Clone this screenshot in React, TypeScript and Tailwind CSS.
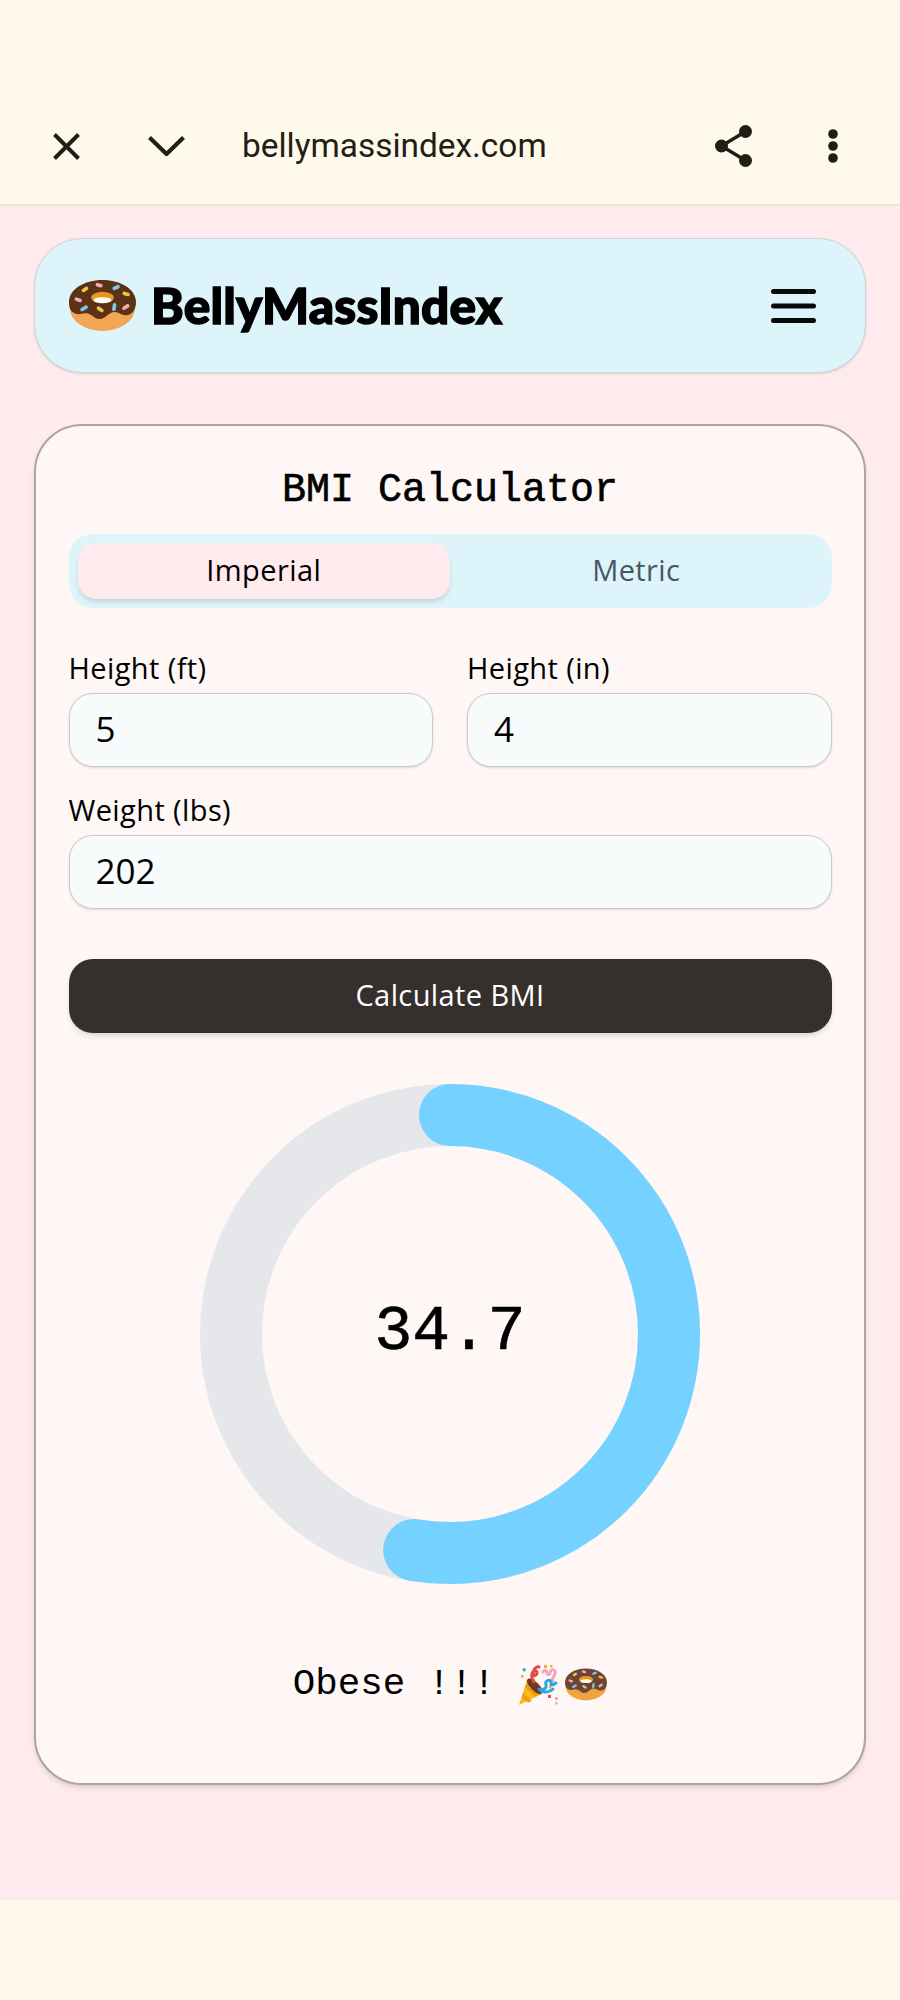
function Doughnut({ className, choc = "#5a3216", dough = "#f2a552" }: { className: string; choc?: string; dough?: string }) {
  return (
    <svg viewBox="0 0 200 152" className={className}>
      <ellipse cx="100" cy="84" rx="97" ry="68" fill={dough} />
      <path
        d="M0 66C0 28 45 0 100 0s100 28 100 66c0 22-12 38-30 39-16 1-24-14-42-8-14 5-20 20-38 19-17-1-24-19-42-17-14 2-24 6-35-2C4 92 0 80 0 66Z"
        fill={choc}
      />
      <ellipse cx="100" cy="52" rx="34" ry="17" fill="#e8981e" />
      <ellipse cx="100" cy="60" rx="27" ry="9" fill="#ffffff" />
      <g strokeWidth="11" strokeLinecap="round" fill="none">
        <path d="M85 14l10 3" stroke="#f4a9b8" />
        <path d="M135 25l11-5" stroke="#7ec8e8" />
        <path d="M43 31l9-6" stroke="#f6c344" />
        <path d="M165 40l11 3" stroke="#f6c344" />
        <path d="M22 57l11 4" stroke="#f4a9b8" />
        <path d="M39 88l12-7" stroke="#7ec8e8" />
        <path d="M88 84l10 7" stroke="#f6c344" />
        <path d="M136 74l-2 13" stroke="#7ec8e8" />
        <path d="M164 84l11-7" stroke="#f4a9b8" />
      </g>
    </svg>
  );
}

function Popper() {
  return (
    <svg viewBox="0 0 40 41" className="w-[40px] h-[41px]">
      <path d="M0 41L8 16 23 30Z" fill="#f9b81c" />
      <path d="M4 29l9 8-4 1.500-6-5ZM7 20l12 11-3 1.500L6 23Z" fill="#ee9a11" />
      <path d="M9 15c3-2 9 3 13 8 2 3 2 6 0 7-3 1-8-3-11-7-3-3-4-7-2-8Z" fill="#6b3a22" />
      <g fill="none" strokeWidth="3" strokeLinecap="round" strokeLinejoin="round">
        <path d="M15 18c-3-4-3-9 0-11 3-1 4 2 2 4s-4-1-2-5 5-3 5-3" stroke="#e8483f" />
        <path d="M24 8c2-3 4-1 4 1s3 2 3 0 2-4 4-3 1 4 0 6-3 3-1 5" stroke="#f2a6bd" />
        <path d="M20 25c3 2 6 0 7-2s-2-4 1-6 5 1 4 3 2 1 5-1M22 27c4 2 9 1 12-2" stroke="#2ba6e4" />
      </g>
      <g>
        <rect x="4" y="4" width="3" height="3" fill="#2ba6e4" transform="rotate(30 5 5)" />
        <rect x="2" y="11" width="2.500" height="2.500" fill="#f2a541" />
        <rect x="25" y="1" width="3" height="3" fill="#f2a541" />
        <rect x="31" y="1" width="2.500" height="2.500" fill="#f2a541" />
        <rect x="29" y="31" width="3" height="3" fill="#e8483f" />
        <rect x="36" y="33" width="3" height="3" fill="#f2a6bd" />
        <rect x="36" y="38" width="2.500" height="2.500" fill="#f2a6bd" />
        <rect x="30" y="22" width="2.500" height="2.500" fill="#f2a541" />
      </g>
    </svg>
  );
}

function Field({ label, value }: { label: string; value: string }) {
  return (
    <label className="block">
      <span className="block h-[38px] leading-[38px] mb-[6px] text-[29px] tracking-[0.4px] text-black">{label}</span>
      <input
        readOnly
        value={value}
        className="block w-full h-[74px] pb-[3px] rounded-[24px] bg-[#f8fbfb] border-[1.5px] border-[#cfc9c6] px-[26px] text-[35px] text-black shadow-sm outline-none"
      />
    </label>
  );
}

function Gauge() {
  const r = 219;
  const c = 2 * Math.PI * r;
  return (
    <svg viewBox="0 0 500 500" className="w-[500px] h-[500px] mx-auto -rotate-90">
      <circle cx="250" cy="250" r={r} fill="none" stroke="#e5e7eb" strokeWidth="62" />
      <circle
        cx="250"
        cy="250"
        r={r}
        fill="none"
        stroke="#75d1ff"
        strokeWidth="62"
        strokeLinecap="round"
        strokeDasharray={`${c * 0.526} ${c}`}
      />
    </svg>
  );
}

export default function App() {
  return (
    <div className="w-[900px] h-[2000px] flex flex-col bg-[#ffebed] font-['Open_Sans','Noto_Sans',sans-serif]">
      {/* browser chrome */}
      <header className="h-[206px] pt-[88px] flex items-center bg-[#fff9eb] border-b-2 border-[#ece7dc] text-[#1f1f17]">
        <svg viewBox="0 0 27 27" className="w-[27px] h-[27px] ml-[53px]" fill="none" stroke="currentColor" strokeWidth="4">
          <path d="M1.500 1.500l24 24M25.500 1.500l-24 24" />
        </svg>
        <svg viewBox="0 0 37 20" className="w-[37px] h-[20px] ml-[68px]" fill="none" stroke="currentColor" strokeWidth="4.200">
          <path d="M1.500 1.500L18.500 18 35.500 1.500" />
        </svg>
        <span className="ml-[57px] flex-1 font-['Roboto',sans-serif] text-[33.400px] leading-none">bellymassindex.com</span>
        <svg viewBox="0 0 37 42" className="w-[37px] h-[42px]" fill="currentColor">
          <circle cx="30.500" cy="6.500" r="6.500" />
          <circle cx="6.500" cy="21" r="6.500" />
          <circle cx="30.500" cy="35.500" r="6.500" />
          <path d="M30.500 6.500L6.500 21l24 14.500" fill="none" stroke="currentColor" strokeWidth="3.500" />
        </svg>
        <svg viewBox="0 0 10 34" className="w-[10px] h-[34px] ml-[76px] mr-[62px]" fill="currentColor">
          <circle cx="5" cy="5" r="4.800" />
          <circle cx="5" cy="17" r="4.800" />
          <circle cx="5" cy="29" r="4.800" />
        </svg>
      </header>

      <main className="flex-1 px-[34px] pt-[32px]">
        <nav className="h-[135px] flex items-center justify-between pl-[34px] pr-[49px] rounded-[48px] bg-[#dcf4fa] border border-[#c9d6de] shadow-sm">
          <div className="flex items-center gap-[15px]">
            <Doughnut className="w-[67px] h-[51px]" />
            <span className="font-['Lato',sans-serif] font-black text-[49.500px] tracking-[0.2px] text-black [-webkit-text-stroke:1.5px_black]">
              BellyMassIndex
            </span>
          </div>
          <svg viewBox="0 0 45 34" className="w-[45px] h-[34px]" fill="none" stroke="#0a0a0a" strokeWidth="5" strokeLinecap="round">
            <path d="M2.500 2.500h40M2.500 17h40M2.500 31.500h40" />
          </svg>
        </nav>

        <section className="mt-[51px] h-[1361px] rounded-[48px] bg-[#fff7f5] border-2 border-[#aaa4a2] shadow-md px-[32.500px] pt-[37px]">
          <h1 className="h-[57px] leading-[56px] text-center font-['Liberation_Mono',monospace] text-[40px] text-black [-webkit-text-stroke:0.6px_black]">
            BMI Calculator
          </h1>

          <div className="mt-[14px] h-[74px] p-[9px] grid grid-cols-2 rounded-[24px] bg-[#dcf4fa]">
            <div className="flex items-center justify-center pb-[2px] rounded-[18px] bg-[#ffebed] shadow-md text-[29px] tracking-[0.4px] text-black">Imperial</div>
            <div className="flex items-center justify-center pb-[2px] text-[29px] tracking-[0.4px] text-[#4b5563]">Metric</div>
          </div>

          <div className="mt-[41px] grid grid-cols-2 gap-[34px]">
            <Field label="Height (ft)" value="5" />
            <Field label="Height (in)" value="4" />
          </div>

          <div className="mt-[24px]">
            <Field label="Weight (lbs)" value="202" />
          </div>

          <button className="mt-[50px] block w-full h-[74px] pb-[2px] rounded-[24px] bg-[#35302d] text-white text-[29px] tracking-[0.4px] shadow-md">
            Calculate BMI
          </button>

          <div className="relative mt-[51px]">
            <Gauge />
            <div className="absolute inset-0 flex items-center justify-center pb-[2px] font-['Liberation_Mono',monospace] text-[63px] text-black [-webkit-text-stroke:0.6px_black]">
              34.7
            </div>
          </div>

          <div className="mt-[73px] h-[54px] flex items-center justify-center font-['Liberation_Mono',monospace] text-[37.500px] text-black">
            <span>Obese !!!</span>
            <span className="ml-[24px]"><Popper /></span>
            <span className="ml-[6px]"><Doughnut className="w-[42px] h-[33px]" choc="#6b4636" dough="#efa33c" /></span>
          </div>
        </section>
      </main>

      <div className="h-[100px] bg-[#fff9eb]" />
    </div>
  );
}
